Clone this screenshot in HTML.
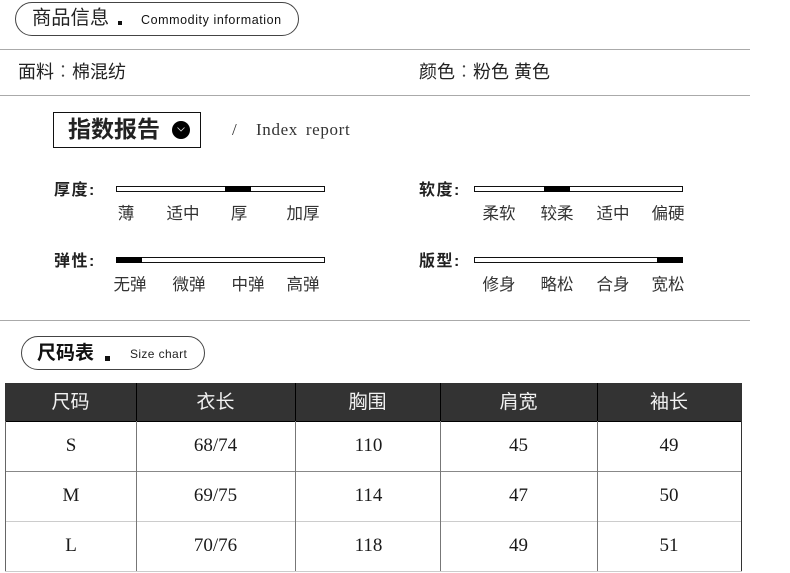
<!DOCTYPE html>
<html><head><meta charset="utf-8"><style>
html,body{margin:0;padding:0;background:#fff}
#p{position:relative;width:790px;height:573px;overflow:hidden;background:#fff;font-family:"Liberation Sans","Noto Sans CJK SC",sans-serif;color:#222}
#p div{position:absolute;box-sizing:border-box;white-space:nowrap}
.hr{left:0;width:750px;height:1px;background:#aaa}
.t{line-height:24px;height:24px}
.cn{font-family:"Noto Sans CJK TC",sans-serif;font-weight:300;color:#444;line-height:0}
.lb{font-size:16.5px;color:#333;text-align:center;width:44px;line-height:20px}
.h{font-size:16px;font-weight:bold;color:#222;line-height:20px;letter-spacing:1.5px}
.bar{height:6px;border:1px solid #111;background:#fff}
.k{background:#000;height:6px}
.c{text-align:center;font-family:"Liberation Serif","Noto Sans CJK SC",serif;font-size:19px;line-height:24px;color:#1a1a1a}
.th{text-align:center;font-size:19px;line-height:24px;color:#f2f2f2;top:391px}
.v{width:1px;background:#777;top:421px;height:150px}
.rh{left:5px;width:737px;height:1px}
</style></head><body><div id="p">

<div style="left:15px;top:2px;width:284px;height:34px;border:1px solid #444;border-radius:17px"></div>
<div class="t" style="left:32px;top:7px;font-size:19.3px;color:#222">商品信息</div>
<div style="left:118px;top:21px;width:4px;height:4px;background:#111"></div>
<div style="left:141px;top:13px;font-size:12.5px;line-height:15px;color:#111;letter-spacing:.58px">Commodity information</div>

<div class="hr" style="top:49px"></div>
<div class="t" style="left:18px;top:60px;font-size:18px;color:#222">面料<span class="cn">：</span>棉混纺</div>
<div class="t" style="left:419px;top:60px;font-size:18px;color:#222">颜色<span class="cn">：</span>粉色 黄色</div>
<div class="hr" style="top:95px"></div>

<div style="left:53px;top:112px;width:148px;height:36px;border:1px solid #111"></div>
<div style="left:68px;top:114px;font-size:23px;line-height:30px;font-weight:bold;color:#222">指数报告</div>
<div style="left:172px;top:121px;width:18px;height:18px;border-radius:50%;background:#000"></div>
<svg style="position:absolute;left:172px;top:121px" width="18" height="18"><path d="M5.5 6.5 L9 10 L12.5 6.5" fill="none" stroke="#ddd" stroke-width=".8"/></svg>
<div style="left:232px;top:120px;font-family:'Liberation Serif',serif;font-size:17px;line-height:20px;color:#333">/</div>
<div style="left:256px;top:120px;font-family:'Liberation Serif',serif;font-size:17px;line-height:20px;color:#333;letter-spacing:.65px;word-spacing:3px">Index report</div>

<div class="h" style="left:54px;top:181px">厚度:</div>
<div class="bar" style="left:116px;top:186px;width:209px"></div>
<div class="k" style="left:225px;top:186px;width:26px"></div>
<div class="lb" style="left:104px;top:204px">薄</div>
<div class="lb" style="left:161px;top:204px">适中</div>
<div class="lb" style="left:217px;top:204px">厚</div>
<div class="lb" style="left:281px;top:204px">加厚</div>

<div class="h" style="left:54px;top:252px">弹性:</div>
<div class="bar" style="left:116px;top:257px;width:209px"></div>
<div class="k" style="left:116px;top:257px;width:26px"></div>
<div class="lb" style="left:108px;top:275px">无弹</div>
<div class="lb" style="left:167px;top:275px">微弹</div>
<div class="lb" style="left:226px;top:275px">中弹</div>
<div class="lb" style="left:281px;top:275px">高弹</div>

<div class="h" style="left:419px;top:181px">软度:</div>
<div class="bar" style="left:474px;top:186px;width:209px"></div>
<div class="k" style="left:544px;top:186px;width:26px"></div>
<div class="lb" style="left:477px;top:204px">柔软</div>
<div class="lb" style="left:535px;top:204px">较柔</div>
<div class="lb" style="left:591px;top:204px">适中</div>
<div class="lb" style="left:646px;top:204px">偏硬</div>

<div class="h" style="left:419px;top:252px">版型:</div>
<div class="bar" style="left:474px;top:257px;width:209px"></div>
<div class="k" style="left:657px;top:257px;width:26px"></div>
<div class="lb" style="left:477px;top:275px">修身</div>
<div class="lb" style="left:535px;top:275px">略松</div>
<div class="lb" style="left:591px;top:275px">合身</div>
<div class="lb" style="left:646px;top:275px">宽松</div>

<div class="hr" style="top:320px"></div>

<div style="left:21px;top:336px;width:184px;height:34px;border:1px solid #444;border-radius:17px"></div>
<div class="t" style="left:37px;top:342px;font-size:19px;font-weight:bold;color:#111">尺码表</div>
<div style="left:105px;top:356px;width:5px;height:5px;background:#111"></div>
<div style="left:130px;top:347px;font-size:12px;line-height:15px;color:#222;letter-spacing:.38px">Size chart</div>

<div style="left:5px;top:383px;width:737px;height:39px;background:#333;border-bottom:1px solid #000"></div>
<div style="left:136px;top:383px;width:1px;height:39px;background:#000"></div>
<div style="left:295px;top:383px;width:1px;height:39px;background:#000"></div>
<div style="left:440px;top:383px;width:1px;height:39px;background:#000"></div>
<div style="left:597px;top:383px;width:1px;height:39px;background:#000"></div>
<div class="th" style="left:5px;width:131px">尺码</div>
<div class="th" style="left:136px;width:159px">衣长</div>
<div class="th" style="left:295px;width:145px">胸围</div>
<div class="th" style="left:440px;width:157px">肩宽</div>
<div class="th" style="left:597px;width:144px">袖长</div>

<div class="rh" style="top:471px;background:#888"></div>
<div class="rh" style="top:521px;background:#ccc"></div>
<div class="rh" style="top:571px;background:#ccc"></div>
<div class="v" style="left:5px;background:#666"></div>
<div class="v" style="left:136px"></div>
<div class="v" style="left:295px"></div>
<div class="v" style="left:440px"></div>
<div class="v" style="left:597px"></div>
<div class="v" style="left:741px;background:#333"></div>

<div class="c" style="left:5.5px;width:131px;top:434px">S</div>
<div class="c" style="left:136px;width:159px;top:434px">68/74</div>
<div class="c" style="left:296px;width:145px;top:434px">110</div>
<div class="c" style="left:440px;width:157px;top:434px">45</div>
<div class="c" style="left:597px;width:144px;top:434px">49</div>

<div class="c" style="left:5.5px;width:131px;top:484px">M</div>
<div class="c" style="left:136px;width:159px;top:484px">69/75</div>
<div class="c" style="left:296px;width:145px;top:484px">114</div>
<div class="c" style="left:440px;width:157px;top:484px">47</div>
<div class="c" style="left:597px;width:144px;top:484px">50</div>

<div class="c" style="left:5.5px;width:131px;top:534px">L</div>
<div class="c" style="left:136px;width:159px;top:534px">70/76</div>
<div class="c" style="left:296px;width:145px;top:534px">118</div>
<div class="c" style="left:440px;width:157px;top:534px">49</div>
<div class="c" style="left:597px;width:144px;top:534px">51</div>

</div></body></html>
